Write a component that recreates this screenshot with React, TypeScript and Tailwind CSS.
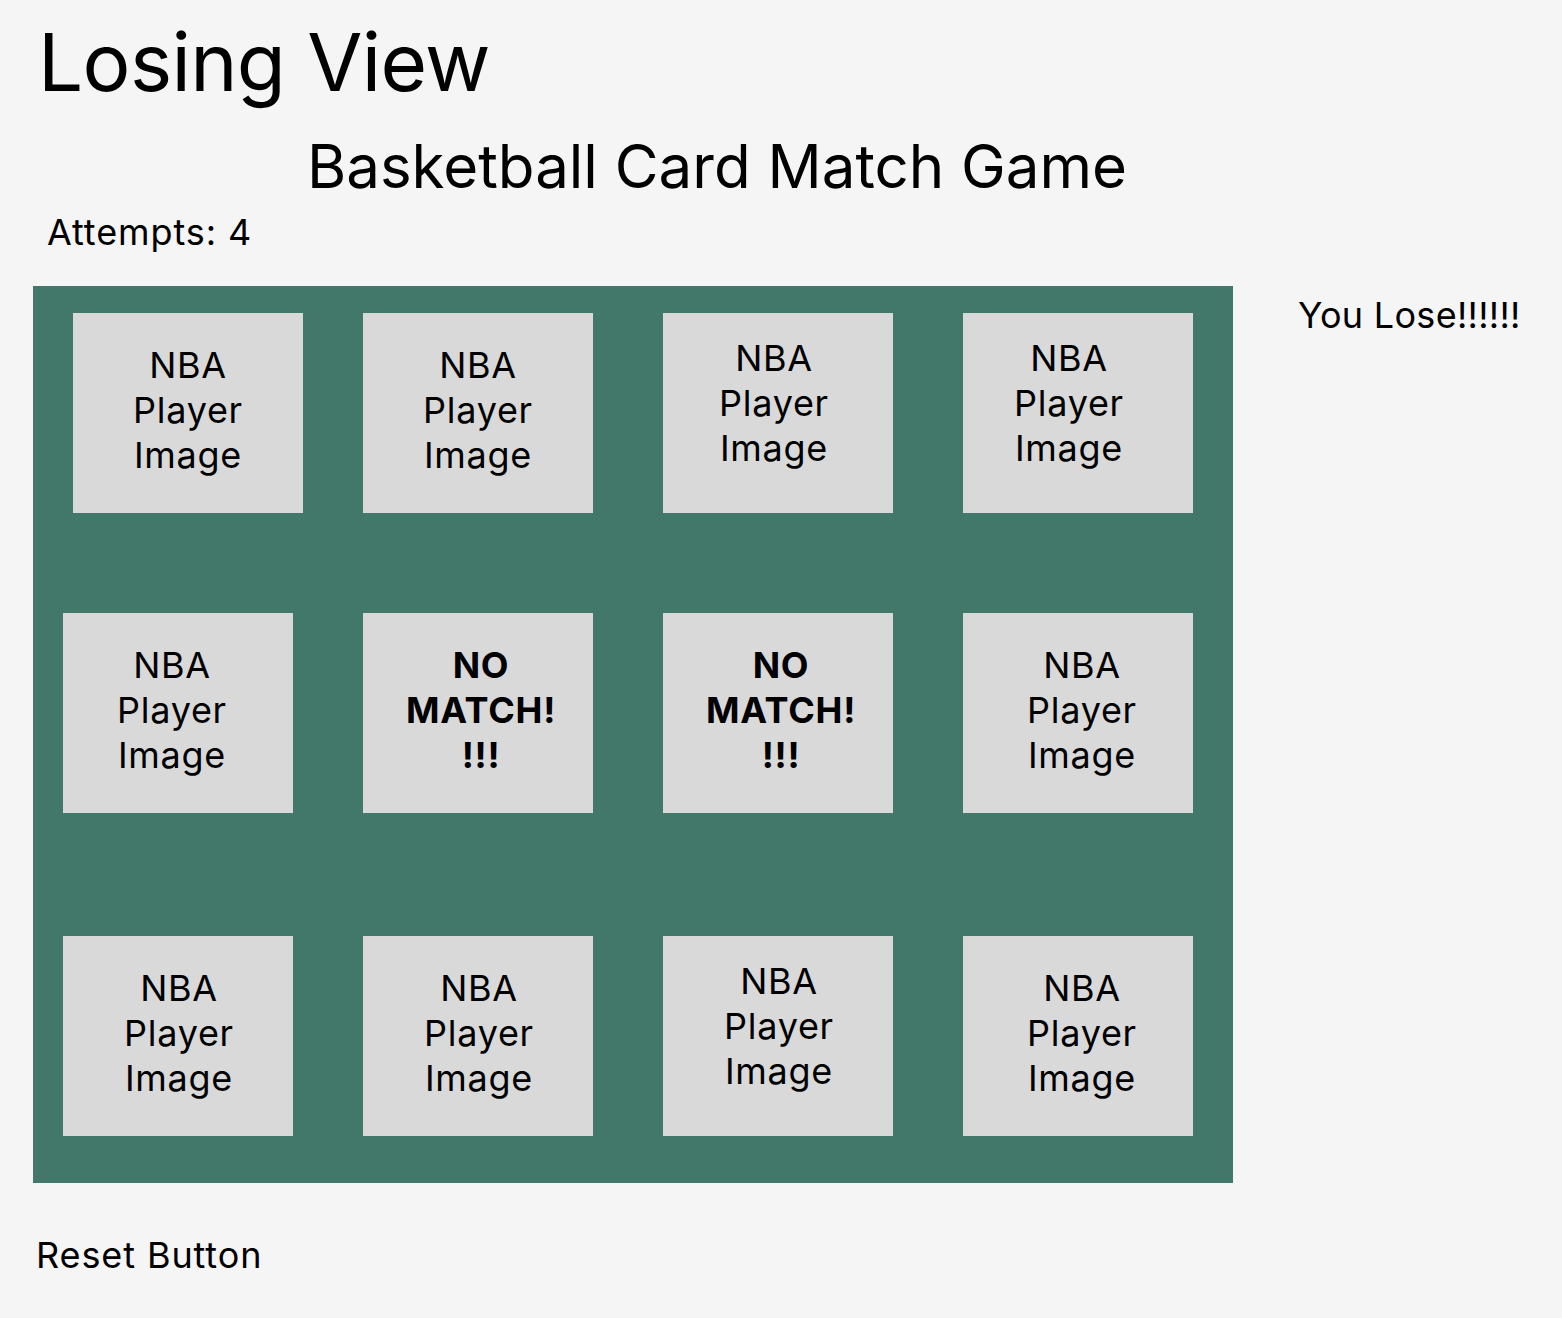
const cards = [
  [
    { text: 'NBA Player Image', bold: false, cls: 'ml-[10px] -mr-[10px]', shift: '-translate-y-[3px]' },
    { text: 'NBA Player Image', bold: false, cls: '', shift: '-translate-y-[3px]' },
    { text: 'NBA Player Image', bold: false, cls: '', shift: '-translate-y-[10px] -translate-x-[4px]' },
    { text: 'NBA Player Image', bold: false, cls: '', shift: '-translate-y-[10px] -translate-x-[9px]' },
  ],
  [
    { text: 'NBA Player Image', bold: false, cls: '', shift: '-translate-y-[3px] -translate-x-[6px]' },
    { text: 'NO MATCH! !!!', bold: true, cls: '', shift: '-translate-y-[3px] translate-x-[3px]' },
    { text: 'NO MATCH! !!!', bold: true, cls: '', shift: '-translate-y-[3px] translate-x-[3px]' },
    { text: 'NBA Player Image', bold: false, cls: '', shift: '-translate-y-[3px] translate-x-[4px]' },
  ],
  [
    { text: 'NBA Player Image', bold: false, cls: '', shift: '-translate-y-[3px] translate-x-[1px]' },
    { text: 'NBA Player Image', bold: false, cls: '', shift: '-translate-y-[3px] translate-x-[1px]' },
    { text: 'NBA Player Image', bold: false, cls: '', shift: '-translate-y-[10px] translate-x-[1px]' },
    { text: 'NBA Player Image', bold: false, cls: '', shift: '-translate-y-[3px] translate-x-[4px]' },
  ],
];

function Card({ text, bold, cls, shift }: { text: string; bold: boolean; cls: string; shift: string }) {
  return (
    <div className={`w-[230px] h-[200px] bg-[#d9d9d9] flex items-center justify-center ${cls}`}>
      <p
        className={`w-[175px] text-center text-[36px] leading-[45px] tracking-[0.02em] text-black ${bold ? 'font-bold' : 'font-normal'} ${shift}`}
      >
        {text}
      </p>
    </div>
  );
}

export default function App() {
  return (
    <div className="min-h-screen bg-[#f5f5f5] text-black font-['Inter','Noto_Sans',sans-serif]">
      <div className="pl-[38px] pt-[22px]">
        <h1 className="text-[80px] leading-none font-normal tracking-[-0.008em]">Losing View</h1>
        <h2 className="mt-[34px] pl-[269px] text-[60px] leading-none font-normal">
          Basketball Card Match Game
        </h2>
        <p className="mt-[18px] pl-[9px] text-[36px] leading-none tracking-[0.025em]">Attempts: 4</p>
      </div>

      <div className="flex items-start mt-[36px] pl-[33px]">
        <div className="w-[1200px] h-[897px] bg-[#42786a] pt-[27px] pl-[30px] flex flex-col">
          {cards.map((row, i) => (
            <div
              key={i}
              className={`flex gap-[70px] ${i === 1 ? 'mt-[100px]' : i === 2 ? 'mt-[123px]' : ''}`}
            >
              {row.map((c, j) => (
                <Card key={j} {...c} />
              ))}
            </div>
          ))}
        </div>
        <p className="ml-[65px] mt-[11px] text-[36px] leading-none tracking-[0.008em]">You Lose!!!!!!</p>
      </div>

      <p className="mt-[54px] pl-[36px] text-[36px] leading-none tracking-[0.025em]">Reset Button</p>
    </div>
  );
}
